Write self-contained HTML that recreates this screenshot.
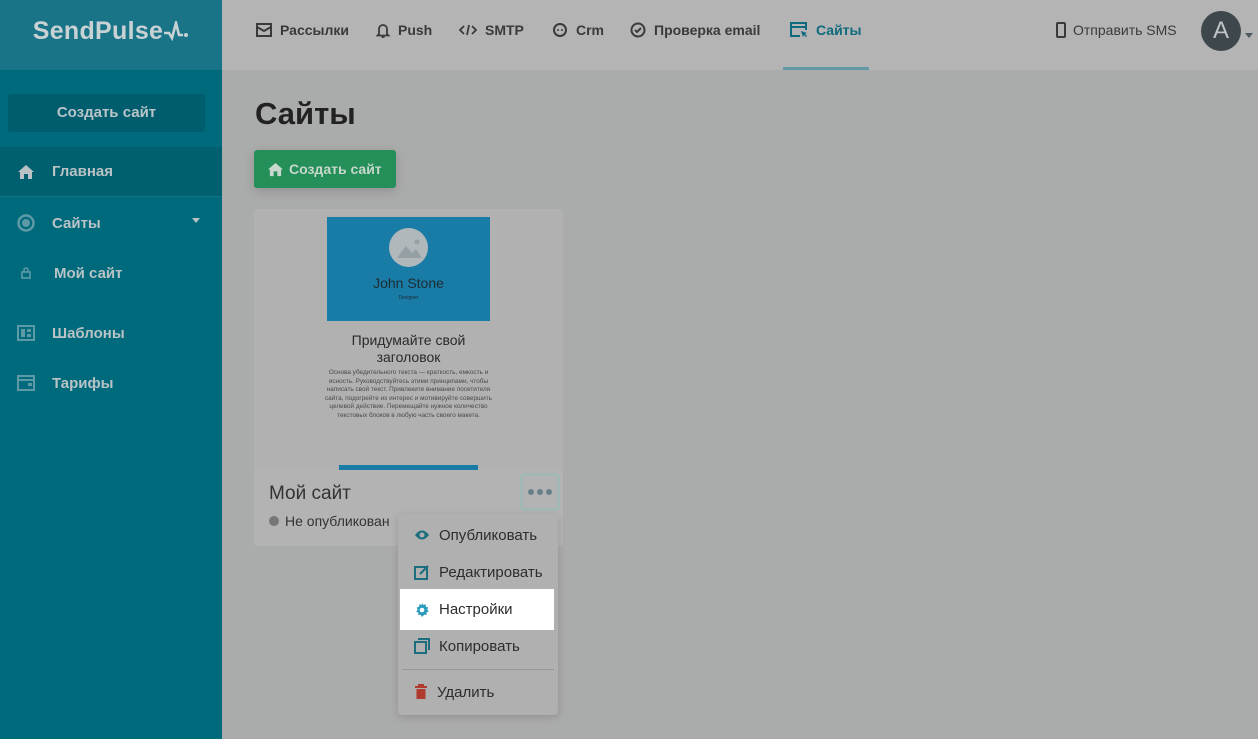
<!DOCTYPE html>
<html><head><meta charset="utf-8"><style>
*{box-sizing:border-box;margin:0;padding:0}
body{width:1258px;height:739px;overflow:hidden;font-family:"Liberation Sans","DejaVu Sans",sans-serif;background:#aaabab;position:relative}
.sb{position:absolute;left:0;top:0;width:222px;height:739px;background:#006a7d}
.logo{height:70px;background:#1a7487;color:#c8d2d4;font-size:25px;font-weight:bold;display:flex;align-items:center;justify-content:center;letter-spacing:.3px;padding-bottom:8px}
.sbtn{position:absolute;left:8px;top:94px;width:197px;height:38px;background:#005d6e;border-radius:3px;color:#b9c5c8;font-weight:bold;font-size:15px;text-align:center;line-height:38px}
.si{position:absolute;left:0;width:222px;height:50px;color:#b9c2c5;font-weight:bold;font-size:15px;display:flex;align-items:center}
.si .ic{width:52px;display:flex;justify-content:center}
.hdr{position:absolute;left:222px;top:0;right:0;height:70px;background:#b4b4b4}
.nav{position:absolute;top:0;height:60px;display:flex;align-items:center;font-size:14px;font-weight:bold;color:#3a3a3a}
.nav svg{margin-right:8px}
h1{position:absolute;left:255px;top:96px;font-size:31px;color:#222;font-weight:bold}
.gbtn{position:absolute;left:254px;top:150px;width:142px;height:38px;background:#248f58;border-radius:3px;color:#c8d8cd;font-weight:bold;font-size:14px;line-height:38px;padding-left:35px;box-shadow:0 3px 10px rgba(0,0,0,.15)}
.card{position:absolute;left:254px;top:209px;width:309px;height:337px;background:#b3b3b3;border-radius:4px}
.prev{position:absolute;left:0;top:0;width:309px;height:261px;background:#b1b1b1;border-radius:4px 4px 0 0;overflow:hidden}
.menu{position:absolute;left:398px;top:514px;width:160px;height:201px;background:#b0b0b0;border-radius:4px;box-shadow:0 2px 8px rgba(0,0,0,.15)}
.mi{position:absolute;left:0;width:160px;height:40px;display:flex;align-items:center;font-size:15px;color:#2d2d2d;padding-left:16px}
.mi svg{margin-right:9px}
</style></head><body>
<div class="sb">
 <div class="logo">SendPulse<svg width="26" height="20" viewBox="0 0 26 20"><path d="M1 12h5l3 5 4-15 3 12h4" stroke="#c8d2d4" stroke-width="2.6" fill="none"/><circle cx="23" cy="14" r="2" fill="#c8d2d4"/></svg></div>
 <div class="sbtn">Создать сайт</div>
 <div class="si" style="top:147px;background:#00606f;border-bottom:1px solid #137386"><span class="ic"><svg width="18" height="16" viewBox="0 0 18 16"><path d="M9 1 1 8h2v7h4v-5h4v5h4V8h2z" fill="#b9c2c5"/></svg></span>Главная</div>
 <div class="si" style="top:198px"><span class="ic"><svg width="18" height="18"><circle cx="9" cy="9" r="7.5" fill="none" stroke="#5e9aa6" stroke-width="2.5"/><circle cx="9" cy="9" r="4" fill="#5e9aa6"/></svg></span>Сайты<span style="position:absolute;left:192px;top:20px;border:4px solid transparent;border-top:5px solid #b9c2c5"></span></div>
 <div class="si" style="top:248px"><span class="ic"><svg width="10" height="12"><rect x="1" y="5" width="8" height="6" fill="none" stroke="#5e9aa6" stroke-width="1.6"/><path d="M3 5V3a2 2 0 0 1 4 0v2" fill="none" stroke="#5e9aa6" stroke-width="1.6"/></svg></span><span style="margin-left:2px">Мой сайт</span></div>
 <div class="si" style="top:308px"><span class="ic"><svg width="18" height="16"><rect x="1" y="1" width="16" height="14" fill="none" stroke="#5e9aa6" stroke-width="2"/><rect x="4" y="4" width="4" height="8" fill="#5e9aa6"/><rect x="10" y="4" width="4" height="3" fill="#5e9aa6"/><rect x="10" y="9" width="4" height="3" fill="#5e9aa6"/></svg></span>Шаблоны</div>
 <div class="si" style="top:358px"><span class="ic"><svg width="18" height="16"><rect x="1" y="1" width="16" height="14" fill="none" stroke="#5e9aa6" stroke-width="2"/><path d="M1 5h16" stroke="#5e9aa6" stroke-width="2"/><rect x="11" y="8" width="4" height="3" fill="#5e9aa6"/></svg></span>Тарифы</div>
</div>
<div class="hdr"></div>
<div class="nav" style="left:256px"><svg width="16" height="14"><rect x="1" y="1" width="14" height="12" fill="none" stroke="#3a3a3a" stroke-width="2"/><path d="M1 4l7 4 7-4" fill="none" stroke="#3a3a3a" stroke-width="2"/></svg>Рассылки</div>
<div class="nav" style="left:376px"><svg width="14" height="16"><path d="M3 12V7a4 4 0 0 1 8 0v5l1.5 1.5h-11z" fill="none" stroke="#3a3a3a" stroke-width="1.8"/><path d="M5.5 15h3" stroke="#3a3a3a" stroke-width="1.8"/></svg>Push</div>
<div class="nav" style="left:459px"><svg width="18" height="14"><path d="M5 3 1 7l4 4M13 3l4 4-4 4M10 2 8 12" fill="none" stroke="#3a3a3a" stroke-width="1.8"/></svg>SMTP</div>
<div class="nav" style="left:552px"><svg width="16" height="16"><circle cx="8" cy="8" r="6" fill="none" stroke="#3a3a3a" stroke-width="2"/><circle cx="6" cy="8" r="1" fill="#3a3a3a"/><circle cx="10" cy="8" r="1" fill="#3a3a3a"/></svg>Crm</div>
<div class="nav" style="left:630px"><svg width="16" height="16"><circle cx="8" cy="8" r="6.5" fill="none" stroke="#3a3a3a" stroke-width="2"/><path d="M5 8l2 2 4-4" fill="none" stroke="#3a3a3a" stroke-width="2"/></svg>Проверка email</div>
<div class="nav" style="left:790px;color:#0e6a7c"><svg width="18" height="16"><path d="M10 14H1V1h15v7M1 5h15" fill="none" stroke="#0e6a7c" stroke-width="2"/><path d="M11 9l6 2-2 1 2 2-1 1-2-2-1 2z" fill="#0e6a7c"/></svg>Сайты</div>
<div style="position:absolute;left:783px;top:67px;width:86px;height:3px;background:#5f9aa6"></div>
<div class="nav" style="left:1056px;font-weight:normal;font-size:14px;color:#3a3a3a"><svg width="10" height="16" style="margin-right:7px"><rect x="1" y="1" width="8" height="14" rx="1" fill="none" stroke="#3a3a3a" stroke-width="2"/></svg>Отправить SMS</div>
<div style="position:absolute;left:1201px;top:11px;width:40px;height:40px;border-radius:50%;background:#3d474c;color:#c0c4c6;font-size:24px;text-align:center;line-height:40px">A</div>
<div style="position:absolute;left:1245px;top:33px;border:4px solid transparent;border-top:5px solid #4a5a60"></div>
<h1>Сайты</h1>
<div class="gbtn"><svg width="17" height="15" viewBox="0 0 18 16" style="position:absolute;left:13px;top:12px"><path d="M9 1 1 8h2v7h4v-5h4v5h4V8h2z" fill="#c8d8cd"/></svg>Создать сайт</div>
<div class="card">
 <div class="prev">
  <div style="position:absolute;left:73px;top:8px;width:163px;height:104px;background:#187ca6"></div>
  <div style="position:absolute;left:135px;top:19px;width:39px;height:39px;border-radius:50%;background:#b0b8bb;overflow:hidden"><svg width="39" height="39"><path d="M8 30l9-12 6 7 4-4 6 9z" fill="#95a0a4"/><circle cx="28" cy="14" r="2.5" fill="#95a0a4"/></svg></div>
  <div style="position:absolute;left:73px;top:66px;width:163px;text-align:center;font-size:14px;color:#1f2c33">John Stone</div>
  <div style="position:absolute;left:73px;top:86px;width:163px;text-align:center;font-size:5px;color:#1f2c33">Designer</div>
  <div style="position:absolute;left:73px;top:123px;width:163px;text-align:center;font-size:14px;line-height:17px;color:#2a2a2a">Придумайте свой заголовок</div>
  <div style="position:absolute;left:66px;top:160px;width:177px;text-align:center;font-size:6.4px;line-height:8.5px;color:#4a4a4a">Основа убедительного текста — краткость, емкость и ясность. Руководствуйтесь этими принципами, чтобы написать свой текст. Привлеките внимание посетителя сайта, подогрейте их интерес и мотивируйте совершить целевой действие. Перемещайте нужное количество текстовых блоков в любую часть своего макета.</div>
  <div style="position:absolute;left:85px;top:256px;width:139px;height:5px;background:#187ca6"></div>
 </div>
 <div style="position:absolute;left:15px;top:274px;font-size:19px;color:#333">Мой сайт</div>
 <div style="position:absolute;left:15px;top:304px;font-size:14px;color:#333;display:flex;align-items:center"><span style="width:10px;height:10px;border-radius:50%;background:#777;margin-right:6px"></span>Не опубликован</div>
 <div style="position:absolute;left:266px;top:264px;width:40px;height:38px;border:3px solid #a2b8b4;border-radius:4px;display:flex;align-items:center;justify-content:center;gap:3px"><i style="width:6px;height:6px;border-radius:50%;background:#6a7f8a"></i><i style="width:6px;height:6px;border-radius:50%;background:#6a7f8a"></i><i style="width:6px;height:6px;border-radius:50%;background:#6a7f8a"></i></div>
</div>
<div class="menu">
 <div class="mi" style="top:1px"><svg width="16" height="12"><path d="M1 6q7-9 14 0-7 9-14 0z" fill="#1c6d7e"/><circle cx="8" cy="6" r="2.5" fill="#b0b0b0"/></svg>Опубликовать</div>
 <div class="mi" style="top:38px"><svg width="16" height="16"><rect x="1" y="3" width="12" height="12" fill="none" stroke="#1c6d7e" stroke-width="2"/><path d="M6 10l8-8" stroke="#1c6d7e" stroke-width="2"/></svg>Редактировать</div>
 <div class="mi" style="top:75px;left:2px;width:154px;height:41px;background:#fff;padding-left:14px"><svg width="16" height="16" viewBox="0 0 16 16"><path d="M8 1l1.3 2 2.3-.7.3 2.4 2.3.8-1 2.1 1.5 1.9-2.2 1 .1 2.4-2.4-.2L8 15l-1.3-2.2-2.4.2.1-2.4-2.2-1L3.7 7.6l-1-2.1L5 4.7l.3-2.4 2.3.7z" fill="#2a9cbb"/><circle cx="8" cy="8" r="2.3" fill="#fff"/></svg>Настройки</div>
 <div class="mi" style="top:112px"><svg width="16" height="16"><rect x="1" y="4" width="11" height="11" fill="none" stroke="#1c6d7e" stroke-width="2"/><path d="M4 1h11v11" fill="none" stroke="#1c6d7e" stroke-width="2"/></svg>Копировать</div>
 <div style="position:absolute;left:4px;top:155px;width:152px;height:1px;background:#95999b"></div>
 <div class="mi" style="top:158px"><svg width="14" height="16"><path d="M1 3h12M5 3V1h4v2" stroke="#b03a2e" stroke-width="2" fill="none"/><rect x="2.5" y="5" width="9" height="10" fill="#b03a2e"/></svg>Удалить</div>
</div>
</body></html>
